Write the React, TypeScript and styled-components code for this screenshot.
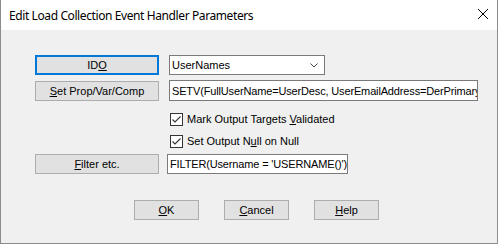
import React from "react";
import styled, { createGlobalStyle } from "styled-components";

const GlobalStyle = createGlobalStyle`
  html, body {
    margin: 0;
    padding: 0;
    background: #ffffff;
  }
  body {
    font-family: "Liberation Sans", Arial, sans-serif;
    font-size: 11px;
    color: #000000;
  }
`;

const Window = styled.div`
  width: 498px;
  height: 244px;
  box-sizing: border-box;
  border: 1px solid #8c8c8c;
  border-top: none;
  background: #f0f0f0;
  display: flex;
  flex-direction: column;
`;

const TitleBar = styled.div`
  height: 30px;
  background: #ffffff;
  display: flex;
  align-items: center;
  justify-content: space-between;
  padding: 0 9px 0 8px;
`;

const Title = styled.span`
  font-family: "Segoe UI", "Noto Sans", sans-serif;
  font-size: 12px;
  letter-spacing: -0.4px;
  color: #000000;
`;

const CloseIcon = styled.svg`
  width: 10px;
  height: 10px;
  margin-top: -2px;
`;

const Body = styled.div`
  flex: 1;
  padding: 25px 0 0 34px;
  display: flex;
  flex-direction: column;
`;

const Row = styled.div<{ $top: number; $height: number }>`
  margin-top: ${(p) => p.$top}px;
  height: ${(p) => p.$height}px;
  display: flex;
  align-items: center;
  gap: 10px;
`;

const Button = styled.button<{ $default?: boolean; $width?: number }>`
  box-sizing: border-box;
  width: ${(p) => p.$width ?? 124}px;
  height: 20px;
  padding: 0;
  background: #e1e1e1;
  border: ${(p) => (p.$default ? "2px solid #0078d7" : "1px solid #adadad")};
  font-family: "Liberation Sans", Arial, sans-serif;
  font-size: 11px;
  color: #000000;
  flex-shrink: 0;
`;

const Field = styled.div<{ $width: number; $height?: number; $shift?: number }>`
  box-sizing: border-box;
  width: ${(p) => p.$width}px;
  height: ${(p) => p.$height ?? 20}px;
  margin-left: ${(p) => p.$shift ?? 0}px;
  background: #ffffff;
  border: 1px solid #7a7a7a;
  padding: 0 2px;
  display: flex;
  align-items: center;
  white-space: nowrap;
  overflow: hidden;
  font-size: 11px;
  letter-spacing: -0.15px;
`;

const Combo = styled(Field)`
  justify-content: space-between;
  padding-right: 6px;
  letter-spacing: 0;
`;

const CheckRow = styled.label<{ $top: number }>`
  margin-top: ${(p) => p.$top}px;
  margin-left: 135px;
  height: 14px;
  display: flex;
  align-items: center;
  gap: 4px;
  font-size: 11px;
`;

const Box = styled.span`
  box-sizing: border-box;
  width: 13px;
  height: 13px;
  background: #ffffff;
  border: 1px solid #333333;
  display: flex;
  align-items: center;
  justify-content: center;
`;

const Footer = styled.div`
  margin-top: 26px;
  margin-left: 99px;
  display: flex;
  gap: 25px;
`;

const Key = styled.u`
  text-decoration: underline;
  text-underline-offset: 1px;
`;

function Check() {
  return (
    <Box>
      <svg width="11" height="11" viewBox="0 0 11 11">
        <path d="M1.5 5.5 L4 8 L9.5 2.5" fill="none" stroke="#333" strokeWidth="1.1" />
      </svg>
    </Box>
  );
}

export default function App() {
  return (
    <>
      <GlobalStyle />
      <Window>
        <TitleBar>
          <Title>Edit Load Collection Event Handler Parameters</Title>
          <CloseIcon viewBox="0 0 10 10">
            <path d="M0 0 L10 10 M10 0 L0 10" stroke="#000" strokeWidth="1" />
          </CloseIcon>
        </TitleBar>
        <Body>
          <Row $top={0} $height={20}>
            <Button $default>
              ID<Key>O</Key>
            </Button>
            <Combo $width={156}>
              <span>UserNames</span>
              <svg width="8" height="5" viewBox="0 0 8 5">
                <path d="M0.5 0.5 L4 4 L7.5 0.5" fill="none" stroke="#444" strokeWidth="1" />
              </svg>
            </Combo>
          </Row>
          <Row $top={5} $height={21}>
            <Button>
              <Key>S</Key>et Prop/Var/Comp
            </Button>
            <Field $width={309} $height={21}>
              SETV(FullUserName=UserDesc, UserEmailAddress=DerPrimaryEmailAddress)
            </Field>
          </Row>
          <CheckRow $top={11}>
            <Check />
            <span>
              Mark Output Targets <Key>V</Key>alidated
            </span>
          </CheckRow>
          <CheckRow $top={8}>
            <Check />
            <span>
              Set Output N<Key>u</Key>ll on Null
            </span>
          </CheckRow>
          <Row $top={6} $height={20}>
            <Button>
              <Key>F</Key>ilter etc.
            </Button>
            <Field $width={181} $shift={-2}>
              FILTER(Username = 'USERNAME()')
            </Field>
          </Row>
          <Footer>
            <Button $width={65}>
              <Key>O</Key>K
            </Button>
            <Button $width={65}>
              <Key>C</Key>ancel
            </Button>
            <Button $width={65}>
              <Key>H</Key>elp
            </Button>
          </Footer>
        </Body>
      </Window>
    </>
  );
}
